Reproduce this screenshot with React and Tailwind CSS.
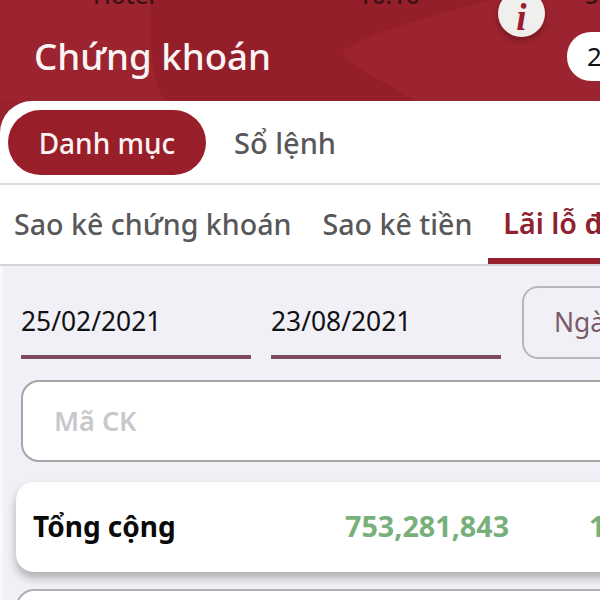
const sans = "font-['Noto_Sans','Open_Sans',sans-serif]";

const SubTab = ({ children, active }) => (
  <div className={`shrink-0 h-full flex items-center px-[15.5px] pb-[2px] ${active ? "border-b-[6px] border-[#98202c] pt-[4px]" : ""}`}>
    <span className={`text-[28.6px] whitespace-nowrap ${active ? "font-semibold text-[#8f2230]" : "font-medium text-[#58585a]"}`}>
      {children}
    </span>
  </div>
);

const DateField = ({ value }) => (
  <div className="w-[230px] shrink-0 h-[73px] flex items-center border-b-4 border-[#7c4a61] pt-[2px] text-[26.4px] text-[#111114]">
    {value}
  </div>
);

export default function App() {
  return (
    <div className={`${sans} relative w-[600px] h-[600px] overflow-hidden bg-[#f0f0f6]`}>
      {/* Header */}
      <div className="relative h-[101px] bg-[#9b2430] overflow-hidden">
        <svg className="absolute inset-0" width="600" height="101" viewBox="0 0 600 101">
          <path d="M150 0 C152 30 148 75 165 101 L415 101 C395 85 350 70 342 52 C370 30 440 15 490 0 Z" fill="#941f2a" />
        </svg>
        <div className="absolute left-[93px] top-[-23px] text-[24px] font-medium text-[#3a1015]">Hotel</div>
        <div className="absolute left-[358px] top-[-23px] text-[24px] font-medium text-[#3a1015]">16:16</div>
        <div className="absolute left-[585px] top-[-23px] text-[24px] font-medium text-[#3a1015]">5</div>
        <div className="relative flex items-center justify-between h-full pl-[34px] pt-[12px]">
          <h1 className="text-[36.7px] font-medium text-[#fbf4f4] whitespace-nowrap">Chứng khoán</h1>
          <div className="w-[33px] h-[49px] rounded-l-[24px] bg-white pl-[20px] flex items-center text-[26px] text-[#111]">2</div>
        </div>
      </div>

      {/* Info button */}
      <div className="absolute left-[498px] top-[-10px] w-[47px] h-[47px] rounded-full bg-[#f1eeee] shadow-[0_3px_6px_rgba(60,0,0,0.4)] flex items-center justify-center pt-[8px]">
        <span className="font-['Liberation_Serif',serif] italic font-bold text-[37px] leading-none text-[#98202c]">i</span>
      </div>

      {/* Main tabs */}
      <div className="bg-[#9a222e]">
        <div className="h-[84px] rounded-tl-[32px] bg-white border-b-[2px] border-[#dddde0] flex items-start pl-[8px] pt-[9px]">
          <div className="w-[198px] h-[65px] rounded-full bg-[#981f2a] flex items-center justify-center text-[28px] font-medium text-[#fbf2f2]">
            Danh mục
          </div>
          <div className="h-[65px] pl-[28px] flex items-center text-[29px] font-medium text-[#58585a]">Sổ lệnh</div>
        </div>
      </div>

      {/* Sub tabs */}
      <div className="h-[81px] bg-white border-b-[2px] border-[#d4d4da] flex items-stretch -ml-[1.5px] pt-[1px]">
        <SubTab>Sao kê chứng khoán</SubTab>
        <SubTab>Sao kê tiền</SubTab>
        <SubTab active>Lãi lỗ đã thực hiện</SubTab>
      </div>

      <div className="border-l-[3px] border-[#f8f8fb] h-full">
        {/* Filters */}
        <div className="pl-[18px] pt-[20px]">
          <div className="flex items-start gap-[20px]">
            <DateField value="25/02/2021" />
            <DateField value="23/08/2021" />
            <div className="shrink-0 w-[120px] h-[73px] ml-[1px] rounded-l-[16px] border-2 border-[#b8b8bc] flex items-center pl-[30px] text-[26.4px] text-[#7c5a68] whitespace-nowrap">
              Ngày
            </div>
          </div>
          <div className="mt-[21px] w-[620px] h-[82px] rounded-[18px] bg-white border-2 border-[#a5a5a8] flex items-center pl-[31px] text-[27px] font-semibold text-[#c8c8cc]">
            Mã CK
          </div>
        </div>

        {/* Summary */}
        <div className="ml-[13px] mt-[20px] w-[620px] h-[90px] rounded-[18px] bg-white shadow-[0_6px_10px_rgba(0,0,0,0.28)] flex items-center pl-[17px] pb-[2px] font-bold whitespace-nowrap">
          <span className="w-[312px] text-[28px] text-[#0a0a0a]">Tổng cộng</span>
          <span className="w-[244px] text-[28.7px] text-[#78b07c]">753,281,843</span>
          <span className="text-[28.7px] text-[#78b07c]">1</span>
        </div>

        <div className="ml-[13px] mt-[17px] w-[620px] h-[60px] rounded-[18px] bg-white border-2 border-[#b0b0b4]" />
      </div>
    </div>
  );
}
